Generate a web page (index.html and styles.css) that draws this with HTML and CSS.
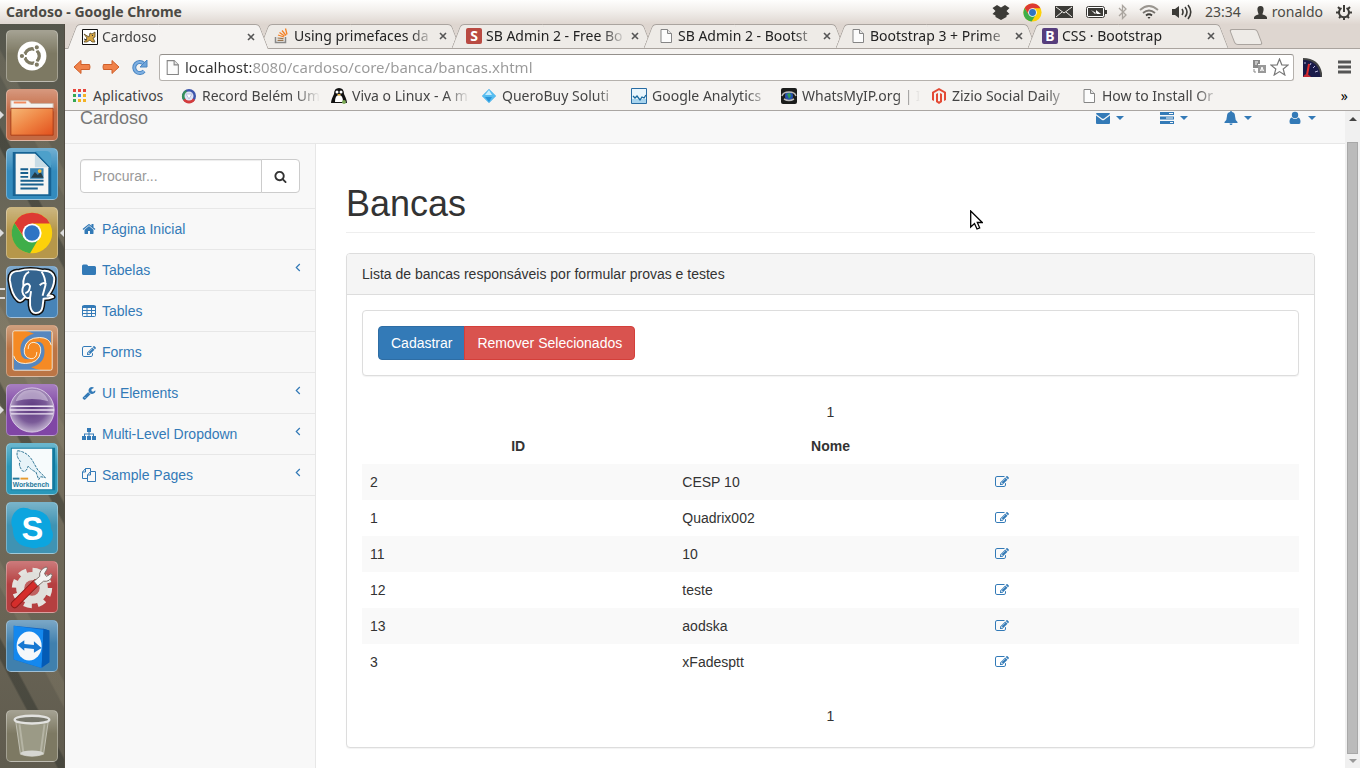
FILE: index.html
```html
<!DOCTYPE html>
<html lang="pt-BR">
<head>
    <meta charset="UTF-8">
    <meta name="viewport" content="width=device-width, initial-scale=1.0">
    <title>Cardoso</title>
    <link rel="stylesheet" href="styles.css">
</head>
<body>
    <!-- shared icons -->
    <svg class="sprite" aria-hidden="true">
        <symbol id="i-edit" viewBox="0 0 1792 1792"><path d="M888 1184l116-116-152-152-116 116v56h96v96h56zm440-720q-16-16-33 1l-350 350q-17 17-1 33t33-1l350-350q17-17 1-33zm80 594v190q0 119-84.500 203.500t-203.500 84.500h-832q-119 0-203.500-84.500t-84.500-203.500v-832q0-119 84.500-203.500t203.500-84.500h832q63 0 117 25 15 7 18 23 3 17-9 29l-49 49q-14 14-32 8-23-6-45-6h-832q-66 0-113 47t-47 113v832q0 66 47 113t113 47h832q66 0 113-47t47-113v-126q0-13 9-22l64-64q15-15 35-7t20 29zm-96-738l288 288-672 672h-288v-288zm444 132l-92 92-288-288 92-92q28-28 68-28t68 28l152 152q28 28 28 68t-28 68z"/></symbol>
        <symbol id="i-page" viewBox="0 0 16 16"><path d="M3 1.500h6.500l4 4v9h-10.500z" fill="#fcfcfc" stroke="#858585"/><path d="M9.500 1.500v4h4" fill="#e4e4e4" stroke="#858585"/></symbol>
        <symbol id="i-close" viewBox="0 0 10 10"><path d="M2 2l6 6M8 2l-6 6" stroke="#555" stroke-width="1.600"/></symbol>
        <symbol id="i-caret" viewBox="0 0 8 4"><path d="M0 0h8l-4 4z"/></symbol>
        <symbol id="i-angle" viewBox="0 0 6 9"><path d="M4.800 1L1.300 4.500l3.500 3.500" fill="none" stroke="currentColor" stroke-width="1.200"/></symbol>
        <symbol id="i-chrome" viewBox="0 0 44 44">
            <circle cx="22" cy="22" r="21" fill="#fcd10a"/>
            <path d="M3.800 11.500A21 21 0 0 0 20 43l9.500-16L22 22l-9 4z" fill="#3fae49"/>
            <path d="M3.800 11.500L14 27l8-5V12h18.500A21 21 0 0 0 3.800 11.500z" fill="#dd3a33"/>
            <circle cx="22" cy="22" r="10" fill="#fff"/>
            <circle cx="22" cy="22" r="8" fill="#2f75c4"/>
        </symbol>
    </svg>

    <header class="topbar">
        <span class="window-title">Cardoso - Google Chrome</span>
        <div class="tray">
            <svg width="18" height="18" viewBox="0 0 18 18" fill="#3c3b37"><path d="M5 2l4 2.500L13 2l4.500 3-3 3 3 3-3 1.500v1.500L9 17l-5.500-3v-1.500L.5 11l3-3-3-3z"/></svg>
            <svg class="tray-chrome" width="19" height="19"><use href="#i-chrome"/></svg>
            <svg width="18" height="12" viewBox="0 0 18 12"><path d="M0 0h18v12H0z" fill="#3c3b37"/><path d="M1 1l8 6 8-6M1 11l6-5M17 11l-6-5" stroke="#f1eeea" fill="none"/></svg>
            <svg width="21" height="12" viewBox="0 0 21 12"><rect x=".5" y=".5" width="18" height="11" rx="2" fill="#fff" stroke="#3c3b37"/><path d="M2 2h15v8H2zM19 4h2v4h-2z" fill="#3c3b37"/><path d="M5 4l5 3V4l5 4h-4l-1-1-1 1z" fill="#fff"/></svg>
            <svg width="10" height="16" viewBox="0 0 10 16"><path d="M1 4l7 7-3.500 3.500v-13L8 5l-7 7" fill="none" stroke="#aaa59f" stroke-width="1.300"/></svg>
            <svg width="20" height="14" viewBox="0 0 20 14" fill="none" stroke-width="1.800"><path d="M1 5q9-8 18 0" stroke="#99958f"/><path d="M4 8q6-5 12 0" stroke="#77736e"/><path d="M7 10.500q3-2.500 6 0" stroke="#3c3b37"/><path d="M8.500 12h3L10 14z" fill="#3c3b37"/></svg>
            <svg width="20" height="16" viewBox="0 0 20 16" fill="none" stroke="#3c3b37" stroke-width="1.600"><path d="M0 5h3l4-3v12l-4-3H0z" fill="#3c3b37" stroke="none"/><path d="M10 5q2 3 0 6M13 3q4 5 0 10M16 1q5.500 7 0 14"/></svg>
            <span>23:34</span>
            <span class="user"><svg width="13" height="13" viewBox="0 0 13 13" fill="#3c3b37"><path d="M6.500 0C9 0 10 2 9.500 4.500 9 7 8.500 7 8.500 8.500q4 .8 4.500 3V13H0v-1.500q.5-2.200 4.500-3C4.500 7 4 7 3.500 4.500 3 2 4 0 6.500 0z"/></svg>ronaldo</span>
            <svg width="16" height="16" viewBox="0 0 16 16" fill="none" stroke="#3c3b37"><path d="M5.500 4a5 5 0 1 0 5 0" stroke-width="2"/><path d="M8 1v7" stroke-width="2"/><path d="M0 8.500h3M13 8.500h3M2 3l2 2M14 3l-2 2M3 14l1.500-1.500M13 14l-1.500-1.500M8 14v2" stroke-width="2"/></svg>
        </div>
    </header>

    <div class="desktop">
        <!-- launcher -->
        <nav class="launcher" aria-label="Launcher">
            <button class="tile dash" aria-label="Dash"><svg viewBox="0 0 52 52"><circle cx="26" cy="26" r="15" fill="#fff"/><circle cx="26" cy="26" r="7.500" fill="none" stroke="#7f7b65" stroke-width="3.500"/><path d="M26 26L17 26M26 26l5-8M26 26l5 8" stroke="#fff" stroke-width="2"/><circle cx="26" cy="26" r="5.500" fill="#fff"/><g fill="#7f7b65" stroke="#fff" stroke-width="1.200"><circle cx="15.500" cy="26" r="2.800"/><circle cx="31" cy="17" r="2.800"/><circle cx="31" cy="35" r="2.800"/></g></svg></button>
            <button class="tile files running" aria-label="Arquivos"><svg viewBox="0 0 52 52">
                <linearGradient id="g-folder" x1="0" y1="0" x2="1" y2="1"><stop offset="0" stop-color="#f6b876"/><stop offset=".5" stop-color="#ef8443"/><stop offset="1" stop-color="#e2501d"/></linearGradient>
                <path d="M4 11h18l3 3h23v8H4z" fill="#f4f2ef" stroke="#c9b4a5"/><path d="M7 12h13v2H7z" fill="#f08a5c"/><path d="M4 19h44v28H4z" fill="url(#g-folder)" stroke="#a93c18"/></svg></button>
            <button class="tile writer" aria-label="Writer"><svg viewBox="0 0 52 52"><path d="M6 3h26l14 14v32H6z" fill="#176394"/><path d="M9 5h20l14 14v28H9z" fill="#f5f5f3"/><path d="M29 2h11q6 0 6 6v12z" fill="#4da0ca"/><path d="M29 5v14h14z" fill="#c8dce6"/><path d="M14 21h8M14 25h8M14 29h8M14 33h24M14 37h24M14 41h18" stroke="#19608e" stroke-width="2"/><path d="M24 20h14v11H24z" fill="#3a85b5"/><path d="M25 30l4-6 3 3 3-3 3 6z" fill="#253c45"/><circle cx="34" cy="23" r="2" fill="#f6bf3d"/></svg></button>
            <button class="tile chrome running focused" aria-label="Google Chrome"><svg viewBox="0 0 52 52"><use href="#i-chrome" x="4" y="4" width="44" height="44"/></svg></button>
            <button class="tile pgadmin running double" aria-label="pgAdmin"><svg viewBox="0 0 52 52" stroke-linejoin="round"><path d="M13 4Q2 4 3 14q2 15 8 20 3 3 6-1l2-2q1 2 5 1v8q1 8 6 8 6 0 7-7l1-8q6 0 10-2-1-2-6-1 8-10 7-19-2-8-12-7Q24 1 13 4z" fill="#34648f" stroke="#111" stroke-width="5"/><path d="M13 4Q2 4 3 14q2 15 8 20 3 3 6-1l2-2q1 2 5 1v8q1 8 6 8 6 0 7-7l1-8q6 0 10-2-1-2-6-1 8-10 7-19-2-8-12-7Q24 1 13 4z" fill="#34648f" stroke="#fff" stroke-width="2"/><path d="M19 31q-5-4-2-11-1-12 6-15M36 5q4 6 4 14l-3 11M17 20q5-5 7 0-1 7-5 7M34 19q4-4 7-1M24 32l1-7" fill="none" stroke="#fff" stroke-width="2"/></svg></button>
            <button class="tile swirl" aria-label="Aplicativo"><svg viewBox="0 0 52 52">
                <rect x="6" y="5" width="41" height="41" fill="#f58a24"/>
                <path d="M17 5h29v15q-2-8-12-8-14 0-16 12-1 9 7 10-10 3-11-8Q13 12 28 8 22 5 17 5z" fill="#5687bf"/>
                <path d="M36 46H7V31q2 8 12 8 14 0 16-12 1-9-7-10 10-3 11 8 1 14-14 18 6 3 11 3z" fill="#5687bf"/>
                <path d="M46 20q-2-8-12-8-14 0-16 12-1 9 7 10 6 0 6-7M7 31q2 8 12 8 14 0 16-12 1-9-7-10-6 0-6 7" fill="none" stroke="#fff1db"/>
                <rect x="6" y="5" width="41" height="41" rx="2" fill="none" stroke="#ece6dc"/></svg></button>
            <button class="tile eclipse running" aria-label="Eclipse"><svg viewBox="0 0 52 52">
                <radialGradient id="g-ball" cx=".5" cy=".45" r=".55"><stop offset="0" stop-color="#5d3a80"/><stop offset=".6" stop-color="#7a5a98"/><stop offset="1" stop-color="#c2b3d0"/></radialGradient>
                <circle cx="26" cy="26" r="23" fill="url(#g-ball)" stroke="#d8c9e5"/><path d="M9 17Q13 5 26 5t17 12q-17-5-34 0z" fill="#d8cde2" opacity=".6"/><path d="M4 22h44M3 26h46M4 30h44" stroke="#eee5f4" stroke-width="1.500"/></svg></button>
            <button class="tile workbench" aria-label="MySQL Workbench"><svg viewBox="0 0 52 52"><path d="M4 4h46v44H4z" fill="#11799f"/><path d="M5 5h42v42H5z" fill="#f7fbfc"/><path d="M11 7q11 1 17 13l4 7 8 8-5-1-2 3-3-8q-5-2-8-6-2 7-6 5-5-7-2-10Q9 13 11 7z" fill="#e7f3f8" stroke="#2a7192" stroke-dasharray="3 1"/><text x="6" y="45" class="wb-text">Workbench</text><path d="M6 36h7" stroke="#26799b" stroke-width="2"/><path d="M14 36h8" stroke="#e79b2d" stroke-width="2"/></svg></button>
            <button class="tile skype" aria-label="Skype"><svg viewBox="0 0 52 52"><path d="M17 5q5 0 8 2 20 0 21 20 3 5 1 11-4 9-14 8-4 2-10 0Q6 44 6 26 3 20 6 13q4-8 11-8z" fill="#0ca5df"/><text x="15" y="38" class="skype-text">S</text></svg></button>
            <button class="tile settings" aria-label="Configurações"><svg viewBox="0 0 52 52"><circle cx="26" cy="27" r="18" fill="none" stroke="#e4e3df" stroke-width="6" stroke-dasharray="8 6.137"/><circle cx="26" cy="27" r="12" fill="none" stroke="#e0dfdb" stroke-width="9"/><circle cx="26" cy="27" r="8" fill="#c06160"/><path d="M8 44l22-22" stroke="#8f1b19" stroke-width="8" stroke-linecap="round"/><path d="M8 44l22-22" stroke="#d52d2b" stroke-width="6" stroke-linecap="round"/><path d="M28 20l6-5q-1-7 7-10l1 2-3 5 2 3 5-3 1 2q-2 7-9 6l-6 5z" fill="#f4f4f2" stroke="#7b6c68"/></svg></button>
            <button class="tile teamviewer" aria-label="TeamViewer"><svg viewBox="0 0 52 52"><path d="M7 5l31 3 6 2v33l-8 6-29-9z" fill="#1260bd"/><path d="M7 5l31 4-2 40L7 40z" fill="#1488ee"/><path d="M38 8l6 2v33l-8 5z" fill="#045bb5"/><ellipse cx="23" cy="26" rx="13" ry="15" fill="#f5f8fa"/><path d="M11 25l7-5v4l10 1v-4l8 7-8 5v-4l-10-1v3z" fill="#1678d2"/></svg></button>
            <button class="tile trash" aria-label="Lixeira"><svg viewBox="0 0 52 52"><path d="M9 10h34l-5 35q-12 4-24 0z" fill="#9b9a86" stroke="#c3c2b5"/><path d="M13 14l4 29M39 14l-4 29" stroke="#b5b4a4" stroke-width="2"/><ellipse cx="26" cy="44" rx="12" ry="3" fill="#d6d6d1"/><ellipse cx="26" cy="9" rx="18" ry="4" fill="#77776b" stroke="#e2e2df" stroke-width="2.500"/></svg></button>
        </nav>

        <div class="browser">
            <div class="tabs">
                <div class="tab active">
                    <svg class="favicon" viewBox="0 0 16 16"><path d="M.5.5h15v15H.5z" fill="#fff" stroke="#111"/><path d="M2 5l5 3 1-4 2 1 3-2v5l-2 1 2 4h-3l-2-2-3 2H2l3-4z" fill="#d5a646" stroke="#5b4b29" stroke-width=".8"/><path d="M2 10l3 1M10 6.500h1" stroke="#333"/></svg>
                    <span class="tab-title">Cardoso</span>
                    <button class="tab-close" aria-label="Fechar"><svg><use href="#i-close"/></svg></button>
                </div>
                <div class="tab">
                    <svg class="favicon" viewBox="0 0 16 16" fill="none"><path d="M1.500 9v5.500h10V9" stroke="#888" stroke-width="1.500"/><path d="M3.500 12.300h6M3.500 10l6 .6" stroke="#99754e" stroke-width="1.200"/><path d="M4 7l6 2M5.500 4.500l5 3.500M8 2.500l4 5M11.500.5l1.500 6" stroke="#f48024" stroke-width="1.300"/></svg>
                    <span class="tab-title">Using primefaces da</span>
                    <button class="tab-close" aria-label="Fechar"><svg><use href="#i-close"/></svg></button>
                </div>
                <div class="tab">
                    <span class="favicon letter sb">S</span>
                    <span class="tab-title">SB Admin 2 - Free Bo</span>
                    <button class="tab-close" aria-label="Fechar"><svg><use href="#i-close"/></svg></button>
                </div>
                <div class="tab">
                    <svg class="favicon"><use href="#i-page"/></svg>
                    <span class="tab-title">SB Admin 2 - Bootst</span>
                    <button class="tab-close" aria-label="Fechar"><svg><use href="#i-close"/></svg></button>
                </div>
                <div class="tab">
                    <svg class="favicon"><use href="#i-page"/></svg>
                    <span class="tab-title">Bootstrap 3 + Prime</span>
                    <button class="tab-close" aria-label="Fechar"><svg><use href="#i-close"/></svg></button>
                </div>
                <div class="tab">
                    <span class="favicon letter bs">B</span>
                    <span class="tab-title">CSS · Bootstrap</span>
                    <button class="tab-close" aria-label="Fechar"><svg><use href="#i-close"/></svg></button>
                </div>
                <button class="new-tab" aria-label="Nova aba"></button>
            </div>

            <div class="toolbar">
                <button aria-label="Voltar"><svg width="18" height="16" viewBox="0 0 18 16"><path d="M8 1.500L1 8l7 6.500v-4h8.500q1-2.500 0-5H8z" fill="#f0824a" stroke="#cf5f2a"/></svg></button>
                <button aria-label="Avançar"><svg width="18" height="16" viewBox="0 0 18 16"><path d="M10 1.500L17 8l-7 6.500v-4H1.500q-1-2.500 0-5H10z" fill="#f0824a" stroke="#cf5f2a"/></svg></button>
                <button aria-label="Recarregar"><svg width="17" height="17" viewBox="0 0 17 17"><path d="M13 12a5.500 5.500 0 1 1-.5-7.500" fill="none" stroke="#4b86c2" stroke-width="4"/><path d="M13 12a5.500 5.500 0 1 1-.5-7.500" fill="none" stroke="#7fb0e2" stroke-width="2"/><path d="M16 1v7H9z" fill="#6ea3d9" stroke="#4b86c2"/></svg></button>
                <div class="omnibox">
                    <svg width="17" height="17"><use href="#i-page"/></svg>
                    <input type="text" class="url" aria-label="Endereço" value="localhost:8080/cardoso/core/banca/bancas.xhtml">
                    <svg width="14" height="14" viewBox="0 0 14 14"><path d="M1 0h7v4H6v4H1z" fill="#888"/><path d="M6 5h8v8H6z" fill="#999"/><path d="M3 2h3M3 4h2M8.500 11l1.500-4 1.500 4M9 10h2" stroke="#fff" fill="none"/><path d="M2 9v3h2" stroke="#888" fill="none"/></svg>
                    <svg width="19" height="18" viewBox="0 0 19 18"><path d="M9.500 1l2.300 5.800 6.200.3-4.800 3.900 1.600 6-5.300-3.400L4.200 17l1.600-6L1 7.100l6.200-.3z" fill="#fff" stroke="#777" stroke-width="1.200"/></svg>
                </div>
                <button aria-label="Velocidade"><svg width="19" height="19" viewBox="0 0 19 19"><path d="M0 1q17 0 19 18H0z" fill="#191a49"/><path d="M0 1q17 0 18.500 18" fill="none" stroke="#444" stroke-width="2"/><path d="M4 17L6 6" stroke="#e32a2a" stroke-width="2"/><path d="M2 4v2M8 5l-1 2M12 8l-2 2M15 13l-3 1" stroke="#b9b9dd"/><path d="M0 19q3-6 8 0z" fill="#c52934"/></svg></button>
                <button class="menu-button" aria-label="Menu"><svg width="13" height="14" viewBox="0 0 13 14"><path d="M0 2h13M0 7h13M0 12h13" stroke="#555" stroke-width="3"/></svg></button>
            </div>

            <div class="bookmarks">
                <a href="#" class="apps"><svg viewBox="0 0 16 16"><path d="M1 1h3v3H1zM6 1h3v3H6zM11 1h3v3h-3z" fill="#e8453c"/><path d="M1 6h3v3H1z" fill="#35a853"/><path d="M6 6h3v3H6z" fill="#3f86ee"/><path d="M11 6h3v3h-3zM6 11h3v3H6zM11 11h3v3h-3z" fill="#f3b224"/><path d="M1 11h3v3H1z" fill="#35a853"/></svg><span>Aplicativos</span></a>
                <a href="#"><svg viewBox="0 0 16 16"><circle cx="8" cy="8" r="7" fill="#3d56ac"/><path d="M8 8L2 12a7 7 0 0 0 12 0z" fill="#d43b3c"/><path d="M8 8L2 12A7 7 0 0 1 5 2z" fill="#35905b"/><circle cx="8" cy="8" r="4.500" fill="#dfe3f5"/><path d="M5 6h6l-3 5z" fill="#fff" stroke="#b8bfdd"/></svg><span>Record Belém Um</span></a>
                <a href="#"><svg viewBox="0 0 16 16"><path d="M8 0q5 0 5 6 3 6 3 9H0q0-3 3-9 0-6 5-6z" fill="#111"/><path d="M4 14q0-7 4-7t4 7z" fill="#fff"/><circle cx="6" cy="4" r="1.500" fill="#fff"/><circle cx="10" cy="4" r="1.500" fill="#fff"/><path d="M6 6h4l-2 2z" fill="#e6ac35"/><circle cx="13" cy="14" r="2" fill="#7ba955"/></svg><span>Viva o Linux - A m</span></a>
                <a href="#"><svg viewBox="0 0 16 16"><path d="M8 1l7 7-7 7-7-7z" fill="#56bdf0" stroke="#87c8ec"/><path d="M8 2l3 5H4z" fill="#c5edff"/><path d="M4 9h7l-3 5z" fill="#2894d9"/></svg><span>QueroBuy Soluti</span></a>
                <a href="#"><svg viewBox="0 0 16 16"><path d="M.5.5h15v15H.5z" fill="#e9f5fc" stroke="#286ca3"/><path d="M1 11h14v4H1z" fill="#a8d4ee"/><path d="M2 8l2 2 2-2 3 4 2-3 2 1 2-3" fill="none" stroke="#17689f" stroke-width="1.300"/></svg><span>Google Analytics</span></a>
                <a href="#"><svg viewBox="0 0 16 16"><rect width="16" height="16" rx="2" fill="#1b1c1b"/><circle cx="8" cy="8" r="4" fill="#2650af"/><path d="M6 6l3-1 1 3-2 3z" fill="#2d9b51"/><path d="M1 8q1-4 7-4t7 4M3 11q5 3 10 0" fill="none" stroke="#bbb" stroke-width="1.500"/></svg><span>WhatsMyIP.org | I</span></a>
                <a href="#"><svg viewBox="0 0 16 16"><path d="M8 0l7 4v8l-2 1V5L8 2.300 3 5v8l-2-1V4z" fill="#e34a35"/><path d="M5 6l2-1v8l1 .6L9 13V5l2 1v8l-3 2-3-2z" fill="#e34a35"/></svg><span>Zizio Social Daily</span></a>
                <a href="#"><svg><use href="#i-page"/></svg><span>How to Install Or</span></a>
                <button class="overflow" aria-label="Mais favoritos">»</button>
            </div>

            <div class="viewport">
                <div class="page">
                    <div class="navbar">
                        <a href="#" class="brand">Cardoso</a>
                        <div class="nav-icons">
                            <a href="#" aria-label="Mensagens"><svg class="icon" viewBox="0 0 14 14"><path d="M0 3q0-1 1-1h12q1 0 1 1L8 7.500Q7 8.200 6 7.500z"/><path d="M0 4.500L6 9q1 .7 2 0l6-4.500V12q0 1-1 1H1q-1 0-1-1z"/></svg><svg class="caret"><use href="#i-caret"/></svg></a>
                            <a href="#" aria-label="Tarefas"><svg class="icon" viewBox="0 0 14 14"><path fill-rule="evenodd" d="M0 1h14v3H0zM9 2v1h4V2zM0 5.500h14v3H0zM6 6.500v1h7v-1zM0 10h14v3H0zM10 11v1h3v-1z"/></svg><svg class="caret"><use href="#i-caret"/></svg></a>
                            <a href="#" aria-label="Alertas"><svg class="icon" viewBox="0 0 14 14"><path d="M7 0q1 0 1 1 3 .6 3 4 0 4 2.500 6v1H.5v-1Q3 9 3 5q0-3.400 3-4 0-1 1-1zM5.500 12.500h3Q8.500 14 7 14t-1.500-1.500z"/></svg><svg class="caret"><use href="#i-caret"/></svg></a>
                            <a href="#" aria-label="Usuário"><svg class="icon" viewBox="0 0 14 14"><circle cx="7" cy="4" r="3.200"/><path d="M3.800 6.500Q7 9.500 10.200 6.500q2.300.7 2.300 4.300Q12.500 13 11 13H3q-1.500 0-1.500-2.200 0-3.600 2.300-4.300z"/></svg><svg class="caret"><use href="#i-caret"/></svg></a>
                        </div>
                    </div>

                    <div class="wrapper">
                        <aside class="sidebar">
                            <form class="search">
                                <input type="text" placeholder="Procurar..." aria-label="Procurar">
                                <button type="button" aria-label="Buscar"><svg width="13" height="13" viewBox="0 0 1792 1792" fill="#333"><path d="M1216 832q0-185-131.500-316.500t-316.500-131.500-316.500 131.500-131.500 316.500 131.500 316.500 316.500 131.500 316.500-131.500 131.500-316.500zm512 832q0 52-38 90t-90 38q-54 0-90-38l-343-342q-179 124-399 124-143 0-273.500-55.500t-225-150-150-225-55.500-273.500 55.500-273.500 150-225 225-150 273.500-55.500 273.500 55.500 225 150 150 225 55.500 273.500q0 220-124 399l343 343q37 37 37 90z"/></svg></button>
                            </form>
                            <ul class="menu">
                                <li><a href="#"><svg class="icon" viewBox="0 0 1792 1792"><path d="M1472 992v480q0 26-19 45t-45 19h-384v-384h-256v384h-384q-26 0-45-19t-19-45v-480q0-1 .5-3t.5-3l575-474 575 474q1 2 1 6zm223-69l-62 74q-8 9-21 11h-3q-13 0-21-7l-692-577-692 577q-12 8-24 7-13-2-21-11l-62-74q-8-10-7-23.500t11-21.500l719-599q32-26 76-26t76 26l244 204v-195q0-14 9-23t23-9h192q14 0 23 9t9 23v408l219 182q10 8 11 21.500t-7 23.500z"/></svg>Página Inicial</a></li>
                                <li><a href="#"><svg class="icon" viewBox="0 0 14 14"><path d="M0 3q0-1.500 1.500-1.500h3Q6 1.500 6 3h6.500Q14 3 14 4.500v6q0 1.500-1.500 1.500h-11Q0 12 0 10.500z"/></svg>Tabelas<svg class="arrow"><use href="#i-angle"/></svg></a></li>
                                <li><a href="#"><svg class="icon" viewBox="0 0 14 14"><rect x=".5" y="1.500" width="13" height="11" rx="1" fill="none" stroke="currentColor"/><path d="M0 2h14v2H0z"/><path d="M5 3v9M9.500 3v9M0 6.500h14M0 9.500h14" stroke="currentColor"/></svg>Tables</a></li>
                                <li><a href="#"><svg class="icon"><use href="#i-edit"/></svg>Forms</a></li>
                                <li><a href="#"><svg class="icon" viewBox="0 0 1792 1792"><path d="M448 1472q0-26-19-45t-45-19-45 19-19 45 19 45 45 19 45-19 19-45zm644-420l-682 682q-37 37-90 37-52 0-91-37l-106-108q-38-36-38-90 0-53 38-91l681-681q39 98 114.500 173.500t173.500 114.500zm634-435q0 39-23 106-47 134-164.500 217.500t-258.500 83.500q-185 0-316.500-131.500t-131.500-316.500 131.500-316.500 316.500-131.500q58 0 121.500 16.500t107.500 46.500q16 11 16 28t-16 28l-293 169v224l193 107q5-3 79-48.500t135.500-81 70.500-35.500q15 0 23.500 10t8.500 25z"/></svg>UI Elements<svg class="arrow"><use href="#i-angle"/></svg></a></li>
                                <li><a href="#"><svg class="icon" viewBox="0 0 14 14"><path d="M5 1h4v4H7.500v1.500H12V9h2v4h-4V9h1V7.500H7.500V9H9v4H5V9h1.500V7.500H3V9h1v4H0V9h2V6.500h4.500V5H5z"/></svg>Multi-Level Dropdown<svg class="arrow"><use href="#i-angle"/></svg></a></li>
                                <li><a href="#"><svg class="icon" viewBox="0 0 14 14"><path d="M5.500 10.500h-5V4l3-3.500h5V3M3.500.5V4h-3M5.500 7l3-3.500h5v10h-8zM8.500 3.500V7h-3" fill="none" stroke="currentColor"/></svg>Sample Pages<svg class="arrow"><use href="#i-angle"/></svg></a></li>
                            </ul>
                        </aside>

                        <main class="content">
                            <h1>Bancas</h1>
                            <section class="panel main-panel">
                                <div class="panel-heading">Lista de bancas responsáveis por formular provas e testes</div>
                                <div class="panel-body">
                                    <div class="panel actions">
                                        <button class="btn btn-primary">Cadastrar</button><button class="btn btn-danger">Remover Selecionados</button>
                                    </div>
                                    <div class="paginator">1</div>
                                    <table>
                                        <thead>
                                            <tr><th>ID</th><th>Nome</th><th></th></tr>
                                        </thead>
                                        <tbody>
                                            <tr><td>2</td><td>CESP 10</td><td><a href="#" aria-label="Editar"><svg><use href="#i-edit"/></svg></a></td></tr>
                                            <tr><td>1</td><td>Quadrix002</td><td><a href="#" aria-label="Editar"><svg><use href="#i-edit"/></svg></a></td></tr>
                                            <tr><td>11</td><td>10</td><td><a href="#" aria-label="Editar"><svg><use href="#i-edit"/></svg></a></td></tr>
                                            <tr><td>12</td><td>teste</td><td><a href="#" aria-label="Editar"><svg><use href="#i-edit"/></svg></a></td></tr>
                                            <tr><td>13</td><td>aodska</td><td><a href="#" aria-label="Editar"><svg><use href="#i-edit"/></svg></a></td></tr>
                                            <tr><td>3</td><td>xFadesptt</td><td><a href="#" aria-label="Editar"><svg><use href="#i-edit"/></svg></a></td></tr>
                                        </tbody>
                                    </table>
                                    <div class="paginator bottom">1</div>
                                </div>
                            </section>
                        </main>
                    </div>
                </div>
                <div class="scrollbar">
                    <svg width="8" height="4" viewBox="0 0 8 4"><path d="M0 4h8L4 0z" fill="#444"/></svg>
                    <div class="thumb"></div>
                    <svg width="8" height="4" viewBox="0 0 8 4"><path d="M0 0h8L4 4z" fill="#999"/></svg>
                </div>
            </div>
        </div>
    </div>

    <svg class="cursor" viewBox="0 0 13 20"><path d="M.7 1v16l3.800-3.500 2.500 5.500 2.700-1.200L7.300 12.500h5z" fill="#fff" stroke="#000" stroke-width="1.300"/></svg>
</body>
</html>
```
FILE: styles.css
```css
* { box-sizing: border-box; }
body { margin: 0; height: 100vh; display: flex; flex-direction: column; overflow: hidden; font-family: "Liberation Sans", Arial, sans-serif; font-size: 14px; line-height: 20px; color: #333; background: #fff; }
a { color: #337ab7; text-decoration: none; }
button { font: inherit; padding: 0; border: 0; background: none; cursor: pointer; }
svg { display: block; flex: none; }
.sprite { position: absolute; width: 0; height: 0; }

/* system bar */
.topbar { display: flex; align-items: center; justify-content: space-between; height: 24px; flex: none; padding: 0 8px 0 6px; background: linear-gradient(#fefefd, #f2efec 45%, #dfd7d1); color: #4c4a45; font-family: "Noto Sans", sans-serif; }
.window-title { font-weight: bold; }
.tray { display: flex; align-items: center; gap: 13px; }
.tray svg:nth-child(5) { margin: 0 -2px; }
.user { display: flex; align-items: center; gap: 5px; }

.desktop { flex: 1; display: flex; min-height: 0; }

/* launcher */
.launcher { width: 65px; flex: none; display: flex; flex-direction: column; gap: 7px; padding: 6px 5px 6px 6px; border-right: 1px solid #514c42; background: repeating-linear-gradient(62deg, transparent 0 50px, rgba(35, 40, 36, .4) 52px 60px, transparent 62px 84px, rgba(160, 150, 125, .2) 86px 96px, transparent 98px 120px), linear-gradient(#55564c, #7b7462 45%, #5f5b4e); }
.tile { position: relative; width: 52px; height: 52px; flex: none; border: 1px solid rgba(255, 255, 255, .3); border-radius: 5px; background-image: linear-gradient(rgba(255, 255, 255, .3), rgba(255, 255, 255, 0) 45%); }
.tile svg { width: 100%; height: 100%; }
.dash { background-color: #7d7963; }
.files { background-color: #c46a44; }
.writer { background-color: #338bbd; }
.chrome { background-color: #b6974a; }
.pgadmin { background-color: #4784b8; }
.swirl { background-color: #bb7545; }
.eclipse { background-color: #8046a5; }
.workbench { background-color: #2a98b9; }
.skype { background-color: #3f93b3; }
.settings { background-color: #b53f40; }
.teamviewer { background-color: #4080ad; }
.trash { background-color: #7d7963; margin-top: auto; }
.running::before { content: ""; position: absolute; left: -7px; top: 21px; border: 4px solid transparent; border-left-color: #ddd; border-right: 0; }
.double::before { width: 5px; height: 7px; border: 2px solid #ddd; border-width: 2px 0; }
.focused::after { content: ""; position: absolute; right: -7px; top: 21px; border: 4px solid transparent; border-right-color: #ddd; border-left: 0; }
.wb-text { font: bold 7px "Liberation Sans", sans-serif; fill: #26799b; }
.skype-text { font: bold 34px "Liberation Sans", sans-serif; fill: #fff; }

/* browser */
.browser { flex: 1; min-width: 0; display: flex; flex-direction: column; background: #f5f3f1; }
.tabs { display: flex; height: 25px; flex: none; padding-left: 7px; background: #ded6d0; border-bottom: 1px solid #aaa49f; font-family: "Noto Sans", sans-serif; }
.tab { position: relative; flex: 0 1 192px; min-width: 0; display: flex; align-items: center; gap: 4px; padding: 0 8px 0 10px; color: #222; --tab: #eeebe7; z-index: 1; }
.tab::before, .tab::after { content: ""; position: absolute; top: 0; bottom: 0; width: 52%; z-index: -1; background: var(--tab); border-top: 1px solid #aaa49f; }
.tab::before { left: 0; border-left: 1px solid #aaa49f; border-top-left-radius: 4px; transform: skewX(-21deg); }
.tab::after { right: 0; border-right: 1px solid #aaa49f; border-top-right-radius: 4px; transform: skewX(21deg); }
.tab.active { --tab: #f5f3f1; z-index: 2; margin-bottom: -1px; color: #444; }
.favicon { width: 16px; height: 16px; flex: none; }
.letter { color: #fff; font-weight: bold; text-align: center; line-height: 16px; border-radius: 2px; }
.sb { background: #b94a42; }
.bs { background: #563d7c; }
.tab-title { flex: 1; overflow: hidden; white-space: nowrap; }
.tab-title, .bookmarks span { mask-image: linear-gradient(to right, #000 calc(100% - 24px), transparent); }
.tab-close svg { width: 10px; height: 10px; }
.new-tab { width: 28px; height: 16px; margin: 5px 0 0 8px; border: 1px solid #aaa49f; border-radius: 3px; background: #eeebe7; transform: skewX(21deg); }

.toolbar { display: flex; align-items: center; gap: 11px; height: 33px; flex: none; padding: 3px 9px 0 8px; }
.toolbar button { flex: none; }
.omnibox { flex: 1; display: flex; align-items: center; gap: 4px; height: 27px; padding: 0 4px; margin-right: -2px; border: 1px solid #b5b1ad; border-top-color: #94908c; border-radius: 3px; background: #fff; }
.url { flex: 1; min-width: 0; border: 0; padding: 0; outline: 0; font: 15px "Noto Sans", sans-serif; color: transparent; background: linear-gradient(90deg, #333 66px, #999 66px); background-clip: text; -webkit-background-clip: text; }
.menu-button { margin-left: 5px; }

.bookmarks { display: flex; align-items: center; height: 29px; flex: none; padding: 0 12px 0 7px; border-bottom: 1px solid #aaa6a3; font-family: "Noto Sans", sans-serif; }
.bookmarks a { display: flex; align-items: center; gap: 5px; flex: 0 1 150px; min-width: 0; padding-right: 11px; color: #444; }
.bookmarks a svg { width: 16px; height: 16px; }
.bookmarks span { flex: 1; overflow: hidden; white-space: nowrap; }
.bookmarks .apps { flex-basis: 109px; }
.bookmarks .apps span { mask-image: none; overflow: visible; }
.overflow { margin-left: auto; }

.viewport { flex: 1; min-height: 0; display: flex; background: #fff; }
.page { flex: 1; min-width: 0; display: flex; flex-direction: column; overflow: hidden; }

/* page */
.navbar { display: flex; align-items: flex-start; justify-content: space-between; height: 33px; flex: none; padding: 0 29px 0 15px; overflow: hidden; background: #f8f8f8; border-bottom: 1px solid #e7e7e7; }
.brand { color: #777; font-size: 18px; line-height: 20px; margin-top: -3px; }
.nav-icons { display: flex; gap: 34px; }
.nav-icons a { display: flex; align-items: center; gap: 6px; height: 14px; padding-left: 2px; }
.icon { width: 14px; height: 14px; fill: currentColor; }
.caret { width: 8px; height: 4px; fill: currentColor; }
.wrapper { flex: 1; display: flex; }

.sidebar { width: 251px; flex: none; background: #f8f8f8; border-right: 1px solid #e7e7e7; }
.search { display: flex; padding: 15px; border-bottom: 1px solid #e7e7e7; }
.search input { flex: 1; min-width: 0; height: 34px; padding: 6px 12px; border: 1px solid #ccc; border-radius: 4px 0 0 4px; font: inherit; box-shadow: inset 0 1px 1px rgba(0, 0, 0, .075); }
.search input::placeholder { color: #999; }
.search button { height: 34px; padding: 0 12px; margin-left: -1px; border: 1px solid #ccc; border-radius: 0 4px 4px 0; background: #fff; }
.menu { list-style: none; margin: 0; padding: 0; }
.menu li { border-bottom: 1px solid #e7e7e7; }
.menu a { display: flex; align-items: center; gap: 6px; padding: 10px 14px 10px 17px; }
.arrow { width: 6px; height: 9px; margin: 0 0 5px auto; }

.content { flex: 1; min-width: 0; padding: 0 30px; }
h1 { margin: 40px 0 20px; padding-bottom: 9px; border-bottom: 1px solid #eee; font-size: 36px; line-height: 39px; font-weight: 500; }
.panel { border: 1px solid #ddd; border-radius: 4px; background: #fff; box-shadow: 0 1px 1px rgba(0, 0, 0, .05); }
.panel-heading { padding: 10px 15px; background: #f5f5f5; border-bottom: 1px solid #ddd; border-radius: 3px 3px 0 0; }
.panel-body { padding: 15px; }
.actions { display: flex; padding: 15px; margin-bottom: 20px; }
.btn { padding: 6px 12px; border: 1px solid; color: #fff; }
.btn-primary { background: #337ab7; border-color: #2e6da4; border-radius: 4px 0 0 4px; }
.btn-danger { background: #d9534f; border-color: #d43f3a; border-radius: 0 4px 4px 0; margin-left: -1px; }
.paginator { padding: 6px; text-align: center; }
.bottom { margin-top: 20px; }
table { width: 100%; table-layout: fixed; border-collapse: collapse; }
th, td { padding: 8px; height: 36px; text-align: left; }
th { text-align: center; }
tbody tr:nth-child(odd) { background: #f9f9f9; }
td svg { width: 14px; height: 14px; fill: currentColor; }

/* window scrollbar */
.scrollbar { width: 15px; flex: none; display: flex; flex-direction: column; align-items: center; padding: 6px 0 5px; background: #f0f0f0; }
.thumb { flex: 1; width: 11px; margin: 21px 0 5px; border: 1px solid #a8a8a8; background: #bbb; }

.cursor { position: absolute; left: 970px; top: 210px; width: 13px; height: 20px; }
```
